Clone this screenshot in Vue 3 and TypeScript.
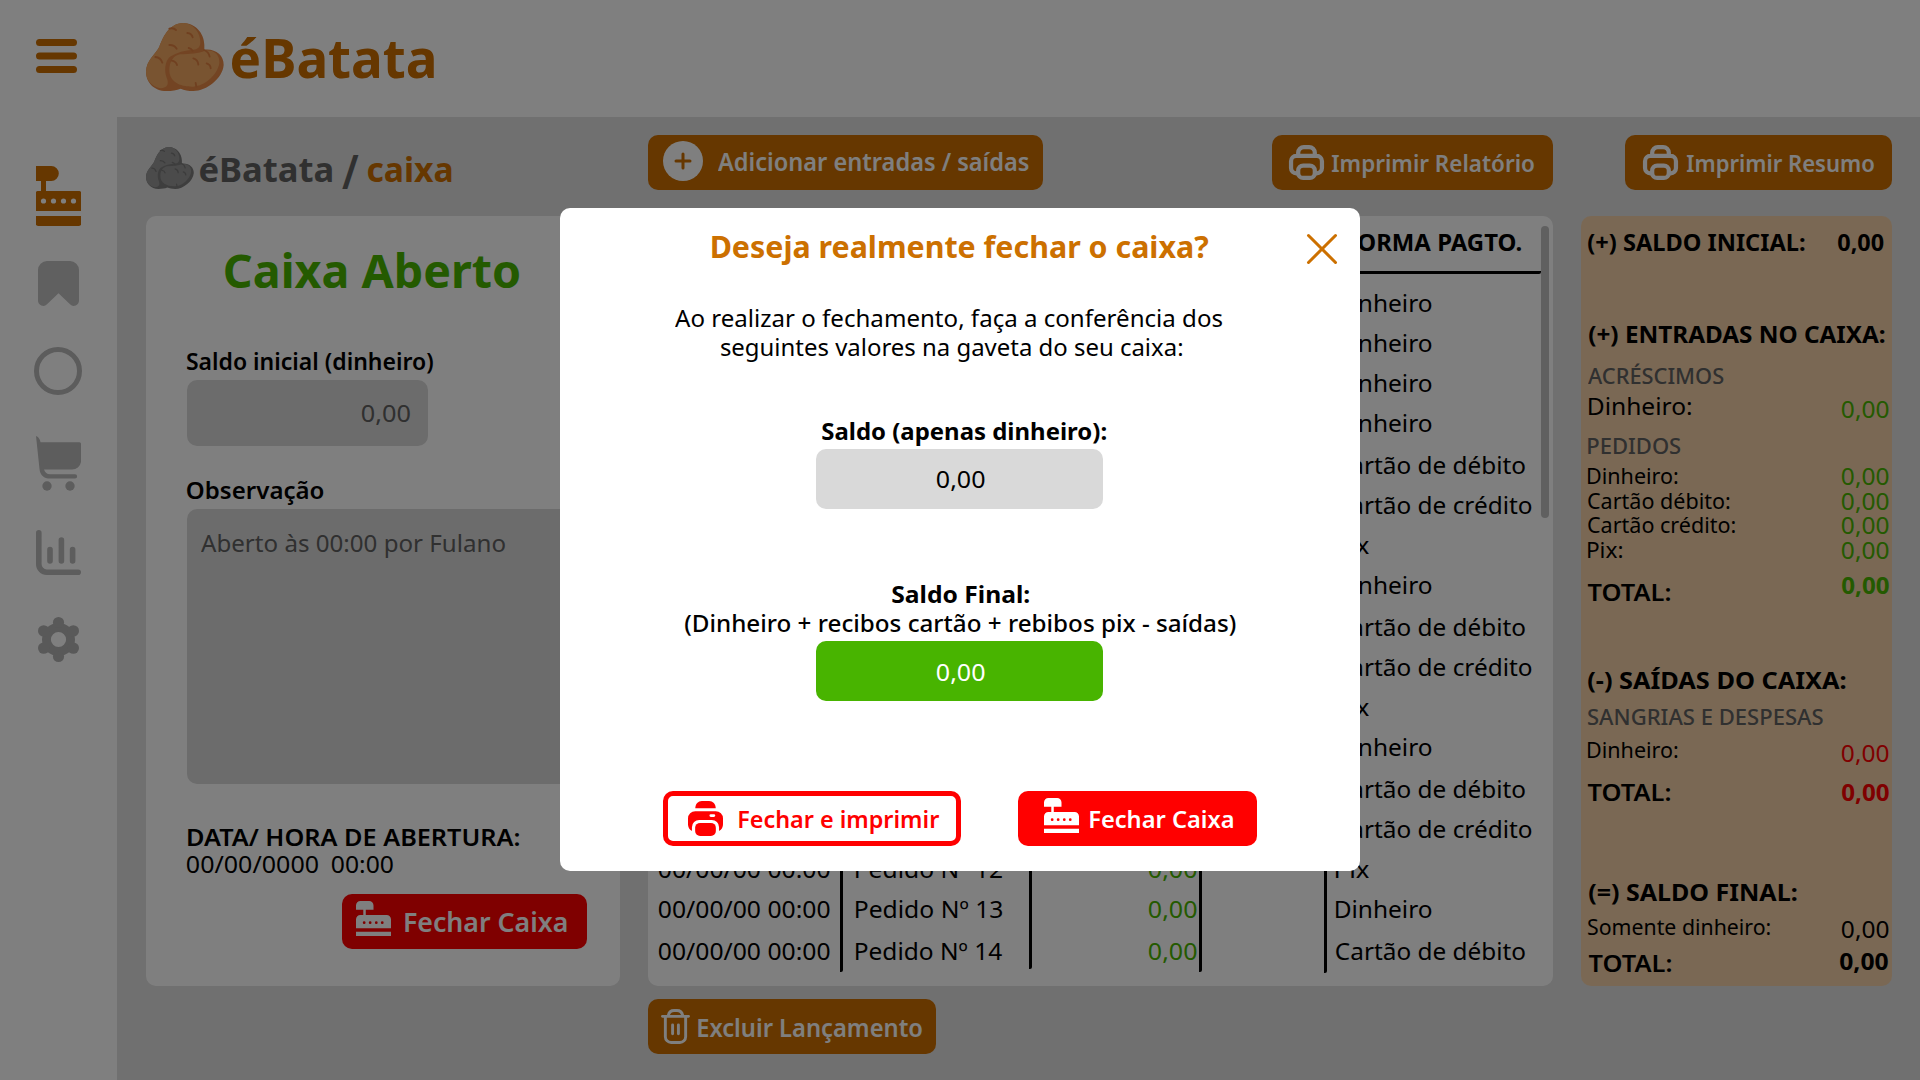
<script setup lang="ts">
import type { Directive } from 'vue'

/* Condenses or expands a label so that its ink spans the given width in pixels. */
const pen = document.createElement('canvas').getContext('2d')!
const vFit: Directive<HTMLElement, number> = {
  mounted(el, binding) {
    const cs = getComputedStyle(el)
    const size = parseFloat(cs.fontSize)
    const zoom = 400 / size
    pen.font = `${cs.fontWeight} 400px ${cs.fontFamily}`
    const m = pen.measureText(el.textContent ?? '')
    const left = m.actualBoundingBoxLeft / zoom
    const ink = m.actualBoundingBoxRight / zoom + left
    const scale = binding.value / ink
    el.style.width = `${binding.value}px`
    el.style.transform = `translateX(${left * scale}px) scaleX(${scale})`
  },
}

type Pay = 'Dinheiro' | 'Cartão de débito' | 'Cartão de crédito' | 'Pix'
const payWidth: Record<Pay, number> = {
  'Dinheiro': 95.5,
  'Cartão de débito': 189,
  'Cartão de crédito': 195.5,
  'Pix': 33,
}
const cycle: Pay[] = ['Dinheiro', 'Cartão de débito', 'Cartão de crédito', 'Pix']
const entries = Array.from({ length: 17 }, (_, i) => {
  const pay: Pay = i < 3 ? 'Dinheiro' : cycle[(i - 3) % 4]
  const n = i - 2
  return { pay, n, name: n > 0 ? `Pedido Nº ${n}` : '', nameWidth: n > 9 ? 146 : 132, tall: pay === 'Cartão de débito' }
})

interface Line {
  label: string
  w: number
  kind: 'head' | 'group' | 'item' | 'big' | 'total'
  gap: number
  left?: number
  tone?: 'green' | 'red' | 'black'
  drop?: number
  vw?: number
  right?: number
}
const summary: Line[] = [
  { label: '(+) SALDO INICIAL:', w: 216.5, kind: 'head', gap: 15.7, tone: 'black', drop: 0, vw: 45.5, right: 9 },
  { label: '(+) ENTRADAS NO CAIXA:', w: 295.5, kind: 'head', gap: 72.7, left: 1 },
  { label: 'ACRÉSCIMOS', w: 135.5, kind: 'group', gap: 22 },
  { label: 'Dinheiro:', w: 102, kind: 'big', gap: 9.7, left: 1, tone: 'green', drop: 2.6 },
  { label: 'PEDIDOS', w: 92.5, kind: 'group', gap: 19.5 },
  { label: 'Dinheiro:', w: 89.5, kind: 'item', gap: 10.1, tone: 'green', drop: 0 },
  { label: 'Cartão débito:', w: 141.5, kind: 'item', gap: 5, tone: 'green', drop: 0 },
  { label: 'Cartão crédito:', w: 147, kind: 'item', gap: 4.5, tone: 'green', drop: 0 },
  { label: 'Pix:', w: 34, kind: 'item', gap: 4.8, tone: 'green', drop: 0 },
  { label: 'TOTAL:', w: 82, kind: 'total', gap: 21.7, tone: 'green', drop: -7, vw: 47, right: 3 },
  { label: '(-) SAÍDAS DO CAIXA:', w: 257.5, kind: 'head', gap: 68 },
  { label: 'SANGRIAS E DESPESAS', w: 235, kind: 'group', gap: 17.8 },
  { label: 'Dinheiro:', w: 89.5, kind: 'item', gap: 12.8, tone: 'red', drop: 3 },
  { label: 'TOTAL:', w: 82, kind: 'total', gap: 21.4, tone: 'red', drop: 0, vw: 47, right: 3 },
  { label: '(=) SALDO FINAL:', w: 207.5, kind: 'head', gap: 80, left: 1 },
  { label: 'Somente dinheiro:', w: 182, kind: 'item', gap: 15, tone: 'black', drop: 2 },
  { label: 'TOTAL:', w: 82, kind: 'total', gap: 16, left: 0.5, tone: 'black', drop: -2, vw: 48, right: 4 },
]
const isBold = (l: Line) => l.kind === 'head' || l.kind === 'total'

const printer = 'M6.3 7V5.3a3.9 3.9 0 0 1 3.9-3.9h3.6a3.9 3.9 0 0 1 3.9 3.9V7M6.3 19.4H5a3.6 3.6 0 0 1-3.6-3.6v-4.7A3.6 3.6 0 0 1 5 7.5h14a3.6 3.6 0 0 1 3.6 3.6v4.7a3.6 3.6 0 0 1-3.6 3.6h-1.3'
const register = 'M0 6V3a3 3 0 0 1 3-3h6a3 3 0 0 1 3 3v3H6.7v3.6H21a3 3 0 0 1 3 3v6H0v-6a3 3 0 0 1 3-3h2V6ZM0 21h24v3H0Z'
const potatoDark = 'M160 39C195 40 222 68 223 104V119C255 115 282 135 281 165C278 205 230 243 190 243C175 243 162 240 152 236C140 241 125 243 110 243C70 243 48 215 48 185C49 150 75 135 88 110C98 85 115 40 160 39Z'
const potatoBack = 'M160 39C190 40 212 68 211 98C210 112 202 118 190 119C165 120 140 127 120 140C103 155 103 185 110 203C118 222 112 233 92 235C65 230 48 210 48 185C49 150 75 135 88 110C98 85 115 40 160 39Z'
const potatoFront = 'M150 133C180 131 205 131 225 122C250 118 270 132 268 160C262 195 225 228 190 230C150 231 118 215 118 180C118 155 130 137 150 133Z'
const potatoMarks = 'M118 56Q130 52 138 60M172 69Q185 70 188 82M118 105Q132 104 140 116M76 141Q92 142 97 158M176 114Q184 116 188 122M125 152Q138 154 141 165M190 145Q204 149 205 164M230 160Q242 164 242 175M222 120Q236 125 239 140M197 219L199 230'
</script>

<template>
  <div class="app">
    <nav class="side">
      <svg class="i-menu" width="41" height="34" viewBox="0 0 41 34"><path d="M3.5 3.5h34M3.5 17h34M3.5 30.5h34" stroke="#cc6e00" stroke-width="7" stroke-linecap="round" /></svg>
      <svg class="i-reg" width="45" height="60" viewBox="0 0 45 60" fill="#cc6e00">
        <path d="M0 0H15.3a7.5 7.5 0 0 1 0 15H10V25H43a2 2 0 0 1 2 1V45H0V26a2 2 0 0 1 2-1H5V15H0ZM0 50H45V59a4 4 0 0 1-3 1H3a4 4 0 0 1-3-1Z" />
        <g fill="#fff"><circle cx="7.5" cy="35" r="2.6" /><circle cx="17.5" cy="35" r="2.6" /><circle cx="27.5" cy="35" r="2.6" /><circle cx="37.5" cy="35" r="2.6" /></g>
      </svg>
      <svg class="i-mark" width="41" height="45" viewBox="0 0 41 45"><path d="M9 0H32a9 9 0 0 1 9 9V39.500a5.300 5.300 0 0 1-9 3.800L20.500 32.300 9 43.300a5.300 5.300 0 0 1-9-3.800V9a9 9 0 0 1 9-9Z" fill="#c0c0c0" /></svg>
      <svg class="i-ring" width="48" height="48" viewBox="0 0 48 48"><circle cx="24" cy="24" r="21.500" fill="none" stroke="#b8b8b8" stroke-width="5" /></svg>
      <svg class="i-cart" width="45" height="55" viewBox="0 0 45 55" fill="#bababa">
        <path d="M0 0C3 1 4.200 4 4.500 6.300H43.500a1.500 1.500 0 0 1 1.500 1.500V26a9 9 0 0 1-9 7.500H8C9 36.500 11 38.300 14 38.300H39a2.100 2.100 0 0 1 0 4.300H14C8 42.600 4 39 3.500 33Z" /><circle cx="11" cy="50" r="4.700" /><circle cx="34" cy="50" r="4.700" />
      </svg>
      <svg class="i-chart" width="45" height="45" viewBox="0 0 45 45"><path d="M2.800 2.800V34a8 8 0 0 0 8 8.200H42.200M14 19.500V31M25.400 10V31M36.600 19.500V31" fill="none" stroke="#bababa" stroke-width="5.600" stroke-linecap="round" /></svg>
      <svg class="i-gear" width="41" height="45" viewBox="-20.500 -22.500 41 45">
        <path fill-rule="evenodd" d="M-16.500 0a16.500 16.500 0 1 0 33 0a16.500 16.500 0 1 0-33 0ZM-7.600 0a7.600 7.600 0 1 1 15.200 0a7.600 7.600 0 1 1-15.200 0Z" fill="#b2b2b2" />
        <g fill="#b2b2b2"><circle cy="-17" r="5.600" /><circle cy="17" r="5.600" /><circle cx="14.800" cy="-8.600" r="5.700" /><circle cx="14.800" cy="8.600" r="5.700" /><circle cx="-14.800" cy="-8.600" r="5.700" /><circle cx="-14.800" cy="8.600" r="5.700" /></g>
      </svg>
    </nav>

    <div class="main">
      <header class="top">
        <svg class="potato" width="78" height="68" viewBox="48 39 234 204">
          <path :d="potatoDark" fill="#e68846" /><path :d="potatoBack" fill="#f2a862" /><path :d="potatoFront" fill="#f2a862" />
          <path :d="potatoMarks" fill="none" stroke="#e08040" stroke-width="5.500" stroke-linecap="round" />
        </svg>
        <span v-fit="202" class="t brand">éBatata</span>
      </header>

      <div class="content">
        <section class="col left">
          <div class="head crumbs">
            <svg class="crumb-potato" width="48" height="42" viewBox="48 39 234 204">
              <path :d="potatoDark" fill="#7c7c7c" /><path :d="potatoBack" fill="#969696" /><path :d="potatoFront" fill="#969696" />
              <path :d="potatoMarks" fill="none" stroke="#787878" stroke-width="6" stroke-linecap="round" />
            </svg>
            <span v-fit="132" class="t crumb c1">éBatata</span>
            <span v-fit="17" class="t crumb c2">/</span>
            <span v-fit="83.5" class="t crumb c3">caixa</span>
          </div>
          <div class="card status">
            <span v-fit="294" class="t status-title">Caixa Aberto</span>
            <span v-fit="246" class="t medium lbl-saldo">Saldo inicial (dinheiro)</span>
            <div class="input"><span v-fit="48" class="t muted">0,00</span></div>
            <span v-fit="136.5" class="t medium lbl-obs">Observação</span>
            <div class="area"><span v-fit="304" class="t muted">Aberto às 00:00 por Fulano</span></div>
            <span v-fit="331" class="t medium lbl-date">DATA/ HORA DE ABERTURA:</span>
            <div class="date"><span v-fit="131">00/00/0000</span><span v-fit="61">00:00</span></div>
            <button class="btn red close-left">
              <svg width="35" height="35" viewBox="0 0 24 24"><path :d="register" fill="#fff" /><path d="M5.600 14.900h.01M9.700 14.900h.01M13.900 14.900h.01M18 14.900h.01" stroke="#f00" stroke-width="1.900" stroke-linecap="round" /></svg>
              <span v-fit="161.500" class="t medium">Fechar Caixa</span>
            </button>
          </div>
        </section>

        <section class="col middle">
          <div class="head mid-head">
            <button class="btn add">
              <svg width="40" height="40" viewBox="0 0 40 40"><circle cx="20" cy="20" r="20" fill="#fff" /><path d="M13 20H27M20 13V27" stroke="#cc6e00" stroke-width="3" stroke-linecap="round" /></svg>
              <span v-fit="310.500" class="t medium">Adicionar entradas / saídas</span>
            </button>
            <button class="btn report">
              <svg width="35" height="35" viewBox="0 0 24 24" fill="none" stroke="#fff" stroke-width="2.900"><path :d="printer" /><rect x="6.300" y="14.100" width="11.400" height="8.500" rx="3.400" /></svg>
              <span v-fit="202" class="t medium">Imprimir Relatório</span>
            </button>
          </div>
          <div class="card table">
            <div class="thead"><span v-fit="175" class="t bold">FORMA PAGTO.</span></div>
            <div class="tbody">
              <div class="tcol when"><div v-for="e in entries" :key="e.n" class="cell" :class="{ tall: e.tall }"><span v-fit="170.500" class="t">00/00/00 00:00</span></div></div>
              <div class="tcol what"><div v-for="e in entries" :key="e.n" class="cell" :class="{ tall: e.tall }"><span v-if="e.name" v-fit="e.nameWidth" class="t">{{ e.name }}</span></div></div>
              <div class="tcol in"><div v-for="e in entries" :key="e.n" class="cell" :class="{ tall: e.tall }"><span v-fit="47.500" class="t green">0,00</span></div></div>
              <div class="tcol out"></div>
              <div class="tcol pay"><div v-for="e in entries" :key="e.n" class="cell" :class="{ tall: e.tall }"><span v-fit="payWidth[e.pay]" class="t">{{ e.pay }}</span></div></div>
            </div>
            <div class="thumb"></div>
          </div>
          <button class="btn remove">
            <svg width="29" height="35" viewBox="2 0 20 24" fill="#fff"><path d="M21,4H17.900A5.009,5.009,0,0,0,13,0H11A5.009,5.009,0,0,0,6.100,4H3A1,1,0,0,0,3,6H4V19a5.006,5.006,0,0,0,5,5h6a5.006,5.006,0,0,0,5-5V6h1a1,1,0,0,0,0-2ZM11,2h2a3.006,3.006,0,0,1,2.829,2H8.171A3.006,3.006,0,0,1,11,2Zm7,17a3,3,0,0,1-3,3H9a3,3,0,0,1-3-3V6H18Z" /><path d="M10,18a1,1,0,0,0,1-1V11a1,1,0,0,0-2,0v6A1,1,0,0,0,10,18Z" /><path d="M14,18a1,1,0,0,0,1-1V11a1,1,0,0,0-2,0v6A1,1,0,0,0,14,18Z" /></svg>
            <span v-fit="224" class="t medium">Excluir Lançamento</span>
          </button>
        </section>

        <section class="col right">
          <div class="head right-head">
            <button class="btn resume">
              <svg width="35" height="35" viewBox="0 0 24 24" fill="none" stroke="#fff" stroke-width="2.900"><path :d="printer" /><rect x="6.300" y="14.100" width="11.400" height="8.500" rx="3.400" /></svg>
              <span v-fit="187" class="t medium">Imprimir Resumo</span>
            </button>
          </div>
          <div class="card summary">
            <div v-for="(l, i) in summary" :key="i" class="line" :style="{ marginTop: l.gap + 'px', paddingLeft: (l.left ?? 0) + 'px', paddingRight: (l.right ?? 3.5) + 'px' }">
              <span v-fit="l.w" class="t" :class="l.kind">{{ l.label }}</span>
              <span v-if="l.tone" v-fit="l.vw ?? 46.500" class="t" :class="[l.tone, { bold: isBold(l) }]" :style="{ marginTop: l.drop + 'px' }">0,00</span>
            </div>
          </div>
        </section>
      </div>
    </div>

    <div class="overlay">
      <div class="modal">
        <svg class="x" width="30" height="30" viewBox="0 0 30 30"><path d="M1.500 1.500 28.500 28.500M28.500 1.500 1.500 28.500" stroke="#cc7000" stroke-width="3" stroke-linecap="round" /></svg>
        <span v-fit="496.500" class="t m-title">Deseja realmente fechar o caixa?</span>
        <span v-fit="547" class="t m-p1">Ao realizar o fechamento, faça a conferência dos</span>
        <span v-fit="461" class="t m-p2">seguintes valores na gaveta do seu caixa:</span>
        <span v-fit="284" class="t bold m-cash">Saldo (apenas dinheiro):</span>
        <div class="m-box"><span v-fit="47.500" class="t">0,00</span></div>
        <span v-fit="137" class="t bold m-final">Saldo Final:</span>
        <span v-fit="550.500" class="t semi m-sub">(Dinheiro + recibos cartão + rebibos pix - saídas)</span>
        <div class="m-box ok"><span v-fit="47.500" class="t">0,00</span></div>
        <div class="actions">
          <button class="btn outline">
            <svg width="35" height="35" viewBox="0 0 24 24" fill="#f00"><path d="M5 5C5 2 7 0 9.500 0h5C17 0 19 2 19 5Z" /><path fill-rule="evenodd" d="M5 7h14a5 5 0 0 1 5 5v4a5 5 0 0 1-2.700 4.500V18a5 5 0 0 0-5-5H7.700a5 5 0 0 0-5 5v2.500A5 5 0 0 1 0 16v-4A5 5 0 0 1 5 7ZM15.700 9a1 1 0 0 0 0 2h2a1 1 0 0 0 0-2Z" /><rect x="4.900" y="15" width="14.200" height="9" rx="3.400" /></svg>
            <span v-fit="200" class="t medium">Fechar e imprimir</span>
          </button>
          <button class="btn red confirm">
            <svg width="35" height="35" viewBox="0 0 24 24"><path :d="register" fill="#fff" /><path d="M5.600 14.900h.01M9.700 14.900h.01M13.900 14.900h.01M18 14.900h.01" stroke="#f00" stroke-width="1.900" stroke-linecap="round" /></svg>
            <span v-fit="143" class="t medium">Fechar Caixa</span>
          </button>
        </div>
      </div>
    </div>
  </div>
</template>

<style>
body { margin: 0; overflow: hidden; }
</style>

<style scoped>
.app { position: relative; display: flex; width: 1920px; height: 1080px; overflow: hidden; background: #fff; color: #000; font-family: "Noto Sans", "Open Sans", sans-serif; font-size: 24px; line-height: 20px; }
.t { display: block; flex: none; white-space: nowrap; transform-origin: 0 50%; }
svg { display: block; flex: none; overflow: visible; }
.medium { font-weight: 600; }
.semi { font-weight: 500; }
.bold { font-weight: 700; }
.muted { color: #606060; }
.green { color: #48b400; }
.red.t { color: #f00; }

.side { flex: none; width: 117px; display: flex; flex-direction: column; padding: 39px 0 0 36px; box-sizing: border-box; }
.i-reg { margin-top: 93px; }
.i-mark { margin: 35px 0 0 2px; }
.i-ring { margin: 41px 0 0 -2px; }
.i-cart { margin-top: 41px; }
.i-chart { margin-top: 39px; }
.i-gear { margin: 42px 0 0 2px; }

.main { flex: 1; display: flex; flex-direction: column; }
.top { height: 117px; display: flex; align-items: flex-start; padding-left: 29px; box-sizing: border-box; }
.potato { margin: 23px 8px 0 0; }
.brand { margin-top: 47px; font-size: 54px; font-weight: 700; color: #cc6e00; }

.content { flex: 1; display: flex; gap: 28px; padding: 0 28px 0 29px; background: #e0e0e0; }
.col { flex: none; display: flex; flex-direction: column; }
.left { width: 474px; }
.middle { width: 905px; }
.right { width: 311px; }
.head { flex: none; height: 99px; display: flex; align-items: flex-start; box-sizing: border-box; padding-top: 18px; }
.crumb-potato { margin-top: 12px; }
.crumb { margin-top: 24.300px; font-size: 34.600px; font-weight: 700; color: #606060; }
.c1 { margin-left: 6px; }
.c2 { margin-left: 10px; font-size: 47px; font-weight: 600; margin-top: 25.500px; }
.c3 { margin-left: 9px; color: #cc6e00; }
.mid-head { justify-content: space-between; }
.right-head { justify-content: flex-end; }
.card { flex: none; height: 770px; box-sizing: border-box; border-radius: 10px; background: #fff; }

.btn { display: flex; align-items: flex-start; flex: none; height: 55px; box-sizing: border-box; margin: 0; padding: 0; border: 0; border-radius: 10px; background: #cc6e00; color: #fff; font: inherit; font-size: 25px; line-height: 20px; text-align: left; }
.btn.red { background: #f00; }
.add { width: 395px; padding: 6px 0 0 15px; }
.add .t { margin: 9.500px 0 0 15px; }
.report { width: 281px; padding: 10px 0 0 17px; font-size: 24px; }
.report .t { margin: 7.700px 0 0 8px; }
.resume { width: 267px; padding: 10px 0 0 18px; font-size: 24px; }
.resume .t { margin: 7.700px 0 0 8.500px; }
.remove { width: 288px; margin-top: 13px; padding: 10px 0 0 13px; }
.remove .t { margin: 7.500px 0 0 8px; }

.status { display: flex; flex-direction: column; align-items: flex-start; padding: 43.500px 0 0 41px; }
.status-title { margin-left: 38px; font-size: 46.500px; font-weight: 700; color: #48b400; }
.lbl-saldo { margin-top: 71px; }
.input { width: 241px; height: 66px; margin-top: 9.500px; box-sizing: border-box; padding: 38px 18.500px 0 0; display: flex; justify-content: flex-end; border-radius: 10px; background: #d9d9d9; }
.input .t { margin-top: -15px; }
.lbl-obs { margin-top: 33.700px; }
.area { width: 399px; height: 275px; margin-top: 9.300px; box-sizing: border-box; padding: 24.200px 0 0 14px; border-radius: 10px; background: #d9d9d9; }
.lbl-date { margin: 43.200px 0 0 1px; }
.date { display: flex; gap: 14px; margin-top: 7px; }
.date span { display: block; white-space: nowrap; transform-origin: 0 50%; }
.close-left { width: 245px; margin: 19.800px 0 0 155px; padding: 7px 0 0 14px; font-size: 26.500px; }
.close-left .t { margin: 11.300px 0 0 13.500px; }

.table { position: relative; }
.thead { height: 58px; width: 893px; box-sizing: border-box; padding: 15.700px 20px 0 0; display: flex; justify-content: flex-end; border-bottom: 3px solid #000; border-radius: 0 0 2px 0; }
.tbody { display: flex; align-items: flex-start; }
.tcol { flex: none; box-sizing: border-box; padding-top: 18.700px; border-right: 3px solid #000; border-radius: 0 0 2px 2px; }
.when { width: 195px; height: 698px; padding-left: 11px; }
.what { width: 189px; height: 695px; padding-left: 13px; }
.in { width: 170px; height: 698px; padding-right: 3px; }
.in .cell { display: flex; justify-content: flex-end; }
.out { width: 125px; height: 699px; }
.pay { width: 212px; padding-left: 9px; border: 0; }
.cell { height: 40px; }
.cell.tall { padding-top: 2px; }
.thumb { position: absolute; top: 10px; right: 4px; width: 8px; height: 292px; border-radius: 4px; background: #c0c0c0; }

.summary { padding: 0 0 0 7px; background: #f5d1a9; display: flex; flex-direction: column; }
.line { flex: none; display: flex; justify-content: space-between; align-items: flex-start; height: 20px; }
.head.t { height: auto; display: block; padding: 0; font-weight: 700; }
.total { font-weight: 600; }
.group { font-size: 21.400px; font-weight: 500; color: #606060; }
.item { font-size: 21.400px; }

.overlay { position: absolute; inset: 0; display: flex; justify-content: center; align-items: flex-start; padding-top: 208px; box-sizing: border-box; background: rgba(0, 0, 0, 0.5); }
.modal { position: relative; width: 800px; height: 663px; box-sizing: border-box; padding-top: 27.700px; display: flex; flex-direction: column; align-items: flex-start; border-radius: 10px; background: #fff; }
.x { position: absolute; top: 26px; left: 747px; }
.m-title { margin-left: 152px; font-size: 30.800px; font-weight: 700; color: #cc7000; }
.m-p1 { margin: 52px 0 0 114.500px; }
.m-p2 { margin: 9px 0 0 160.500px; }
.m-cash { margin: 64px 0 0 261.500px; }
.m-box { width: 287px; height: 60px; margin: 8.300px 0 0 256px; box-sizing: border-box; padding: 20px 0 0 121px; border-radius: 10px; background: #d9d9d9; }
.m-box.ok { padding-top: 20.700px; background: #48b400; color: #fff; }
.m-final { margin: 74.700px 0 0 331.500px; }
.m-sub { margin: 9px 0 0 124.500px; }
.actions { display: flex; gap: 57px; margin: 90px 0 0 103px; }
.outline { width: 298px; padding: 5px 0 0 20px; border: 5px solid #f00; background: #fff; color: #f00; font-size: 24px; }
.outline .t { margin: 7.700px 0 0 16px; }
.confirm { width: 239px; padding: 7px 0 0 26px; font-size: 24px; }
.confirm .t { margin: 10.700px 0 0 11px; }
</style>
